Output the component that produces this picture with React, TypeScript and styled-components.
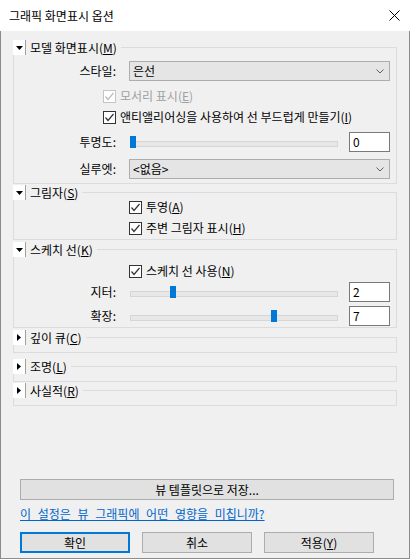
import React from 'react';
import styled, { createGlobalStyle } from 'styled-components';

// --- global ---
const GlobalStyle = createGlobalStyle`
  html, body {
    margin: 0;
    padding: 0;
    background: #ffffff;
  }
  body {
    font-family: "Noto Sans CJK KR", "Noto Sans", sans-serif;
    font-size: 12px;
    color: #000;
  }
  * {
    box-sizing: border-box;
  }
`;

// --- window frame ---
const Window = styled.div`
  width: 410px;
  height: 559px;
  display: flex;
  flex-direction: column;
  background: #f0f0f0;
`;

const TitleBar = styled.div`
  height: 31px;
  flex: none;
  background: #ffffff;
  display: flex;
  align-items: center;
  justify-content: space-between;
  padding: 0 10px 0 9px;
`;

const Title = styled.span`
  font-size: 12px;
  line-height: 16px;
`;

const Body = styled.div`
  flex: 1;
  display: flex;
  flex-direction: column;
  border: 1px solid #8c8c8c;
  border-top: none;
  padding: 9px 12px 5px 12px;
`;

// --- collapsible group ---
const Group = styled.fieldset<{ $mt: number; $pb: number }>`
  margin: ${p => p.$mt}px 0 0 0;
  padding: 0 0 ${p => p.$pb}px 0;
  border: 1px solid #dcdcdc;
  min-width: 0;
  display: flex;
  flex-direction: column;
`;

const Legend = styled.legend`
  padding: 0 4px 0 0;
  margin-left: -1px;
  display: flex;
  align-items: center;
  height: 15px;
  line-height: 15px;
  background: #f0f0f0;
`;

const Toggle = styled.span`
  width: 13px;
  height: 15px;
  display: flex;
  align-items: center;
  justify-content: center;
  background: #ffffff;
  border-right: 1px solid #a0a0a0;
  margin-right: 4px;
`;

// --- rows ---
const FieldRow = styled.div<{ $mt: number }>`
  display: grid;
  grid-template-columns: 102px 1fr;
  column-gap: 13px;
  align-items: center;
  height: 20px;
  margin-top: ${p => p.$mt}px;
  padding-right: 6px;
`;

const FieldLabel = styled.span`
  text-align: right;
  line-height: 14px;
  white-space: nowrap;
`;

const Select = styled.div`
  height: 20px;
  border: 1px solid #adadad;
  background: #e5e5e5;
  display: flex;
  align-items: center;
  justify-content: space-between;
  padding: 0 5px 0 3px;
  line-height: 14px;
`;

const SliderGroup = styled.div`
  display: grid;
  grid-template-columns: 1fr 41px;
  column-gap: 11px;
  align-items: center;
  height: 20px;
`;

const SliderTrack = styled.div`
  position: relative;
  height: 20px;
  &::before {
    content: '';
    position: absolute;
    left: 1px;
    right: 0;
    top: 9px;
    height: 4px;
    background: #e7e7e7;
    border: 1px solid #d6d6d6;
  }
`;

const SliderThumb = styled.span`
  position: absolute;
  top: 4px;
  width: 6px;
  height: 12px;
  background: #0078d7;
`;

const EditBox = styled.div`
  height: 20px;
  border: 1px solid #7a7a7a;
  background: #ffffff;
  padding: 0 3px;
  line-height: 17px;
`;

const CheckRow = styled.div<{ $mt: number; $indent: number; $disabled?: boolean }>`
  display: flex;
  align-items: center;
  gap: 4px;
  height: 14px;
  line-height: 14px;
  margin-top: ${p => p.$mt}px;
  padding-left: ${p => p.$indent}px;
  color: ${p => (p.$disabled ? '#a0a0a0' : '#000')};
  white-space: nowrap;
`;

const CheckBox = styled.span<{ $disabled?: boolean }>`
  width: 13px;
  height: 13px;
  flex: none;
  border: 1px solid ${p => (p.$disabled ? '#c4c4c4' : '#333333')};
  background: #ffffff;
  display: flex;
  align-items: center;
  justify-content: center;
`;

// --- footer ---
const Footer = styled.div`
  margin-top: auto;
  padding: 0 3px 0 7px;
  display: flex;
  flex-direction: column;
`;

const Button = styled.button<{ $default?: boolean; $wide?: boolean }>`
  width: ${p => (p.$wide ? '100%' : '110px')};
  height: 21px;
  padding: 0;
  background: #e1e1e1;
  border: ${p => (p.$default ? '2px solid #0078d7' : '1px solid #adadad')};
  font: inherit;
  font-size: 12px;
  line-height: 14px;
  color: #000;
`;

const HelpLink = styled.a`
  margin-top: 6px;
  height: 16px;
  line-height: 16px;
  color: #0066cc;
  text-decoration: underline;
  word-spacing: 4px;
  align-self: flex-start;
`;

const ButtonRow = styled.div`
  margin-top: 10px;
  display: flex;
  gap: 12px;
`;

// --- drawings ---
const CloseIcon = () => (
  <svg width="11" height="11" viewBox="0 0 11 11">
    <path d="M0.5 0.5 L10.5 10.5 M10.5 0.5 L0.5 10.5" stroke="#000" strokeWidth="1" />
  </svg>
);

const Arrow: React.FC<{ open: boolean }> = ({ open }) =>
  open ? (
    <svg width="7" height="4" viewBox="0 0 7 4">
      <polygon points="0,0 7,0 3.5,4" fill="#000" />
    </svg>
  ) : (
    <svg width="4" height="7" viewBox="0 0 4 7">
      <polygon points="0,0 4,3.5 0,7" fill="#000" />
    </svg>
  );

const Chevron = () => (
  <svg width="8" height="5" viewBox="0 0 8 5">
    <polyline points="0.5,0.5 4,4 7.5,0.5" fill="none" stroke="#606060" strokeWidth="1" />
  </svg>
);

const Check: React.FC<{ disabled?: boolean }> = ({ disabled }) => (
  <svg width="11" height="11" viewBox="0 0 11 11">
    <polyline
      points="1.5,5.5 4,8.5 9.5,2"
      fill="none"
      stroke={disabled ? '#bcbcbc' : '#333'}
      strokeWidth="1.2"
    />
  </svg>
);

// --- parts ---
const GroupHeader: React.FC<{ open: boolean; children: React.ReactNode }> = ({ open, children }) => (
  <Legend>
    <Toggle>
      <Arrow open={open} />
    </Toggle>
    <span>{children}</span>
  </Legend>
);

const Slider: React.FC<{ value: number; max: number; edit: string }> = ({ value, max, edit }) => (
  <SliderGroup>
    <SliderTrack>
      <SliderThumb style={{ left: `calc(1px + (100% - 8px) * ${value / max})` }} />
    </SliderTrack>
    <EditBox>{edit}</EditBox>
  </SliderGroup>
);

const CheckItem: React.FC<{ mt: number; indent: number; disabled?: boolean; children: React.ReactNode }> = ({
  mt,
  indent,
  disabled,
  children,
}) => (
  <CheckRow $mt={mt} $indent={indent} $disabled={disabled}>
    <CheckBox $disabled={disabled}>
      <Check disabled={disabled} />
    </CheckBox>
    <span>{children}</span>
  </CheckRow>
);

// --- main ---
const App: React.FC = () => {
  return (
    <>
      <GlobalStyle />
      <Window>
        <TitleBar>
          <Title>그래픽 화면표시 옵션</Title>
          <CloseIcon />
        </TitleBar>
        <Body>
          <Group $mt={0} $pb={4}>
            <GroupHeader open>
              모델 화면표시(<u>M</u>)
            </GroupHeader>
            <FieldRow $mt={6}>
              <FieldLabel>스타일:</FieldLabel>
              <Select>
                <span>은선</span>
                <Chevron />
              </Select>
            </FieldRow>
            <CheckItem mt={8} indent={89} disabled>
              모서리 표시(<u>E</u>)
            </CheckItem>
            <CheckItem mt={7} indent={89}>
              앤티앨리어싱을 사용하여 선 부드럽게 만들기(<u>I</u>)
            </CheckItem>
            <FieldRow $mt={8}>
              <FieldLabel>투명도:</FieldLabel>
              <Slider value={0} max={100} edit="0" />
            </FieldRow>
            <FieldRow $mt={7}>
              <FieldLabel>실루엣:</FieldLabel>
              <Select>
                <span>&lt;없음&gt;</span>
                <Chevron />
              </Select>
            </FieldRow>
          </Group>

          <Group $mt={1} $pb={4}>
            <GroupHeader open>
              그림자(<u>S</u>)
            </GroupHeader>
            <CheckItem mt={0} indent={115}>
              투영(<u>A</u>)
            </CheckItem>
            <CheckItem mt={7} indent={115}>
              주변 그림자 표시(<u>H</u>)
            </CheckItem>
          </Group>

          <Group $mt={2} $pb={1}>
            <GroupHeader open>
              스케치 선(<u>K</u>)
            </GroupHeader>
            <CheckItem mt={7} indent={115}>
              스케치 선 사용(<u>N</u>)
            </CheckItem>
            <FieldRow $mt={4}>
              <FieldLabel>지터:</FieldLabel>
              <Slider value={2} max={10} edit="2" />
            </FieldRow>
            <FieldRow $mt={4}>
              <FieldLabel>확장:</FieldLabel>
              <Slider value={7} max={10} edit="7" />
            </FieldRow>
          </Group>

          <Group $mt={2} $pb={7}>
            <GroupHeader open={false}>
              깊이 큐(<u>C</u>)
            </GroupHeader>
          </Group>

          <Group $mt={6} $pb={7}>
            <GroupHeader open={false}>
              조명(<u>L</u>)
            </GroupHeader>
          </Group>

          <Group $mt={1} $pb={7}>
            <GroupHeader open={false}>
              사실적(<u>R</u>)
            </GroupHeader>
          </Group>

          <Footer>
            <Button $wide>뷰 템플릿으로 저장...</Button>
            <HelpLink href="#">이 설정은 뷰 그래픽에 어떤 영향을 미칩니까?</HelpLink>
            <ButtonRow>
              <Button $default>확인</Button>
              <Button>취소</Button>
              <Button>
                적용(<u>Y</u>)
              </Button>
            </ButtonRow>
          </Footer>
        </Body>
      </Window>
    </>
  );
};

export default App;
